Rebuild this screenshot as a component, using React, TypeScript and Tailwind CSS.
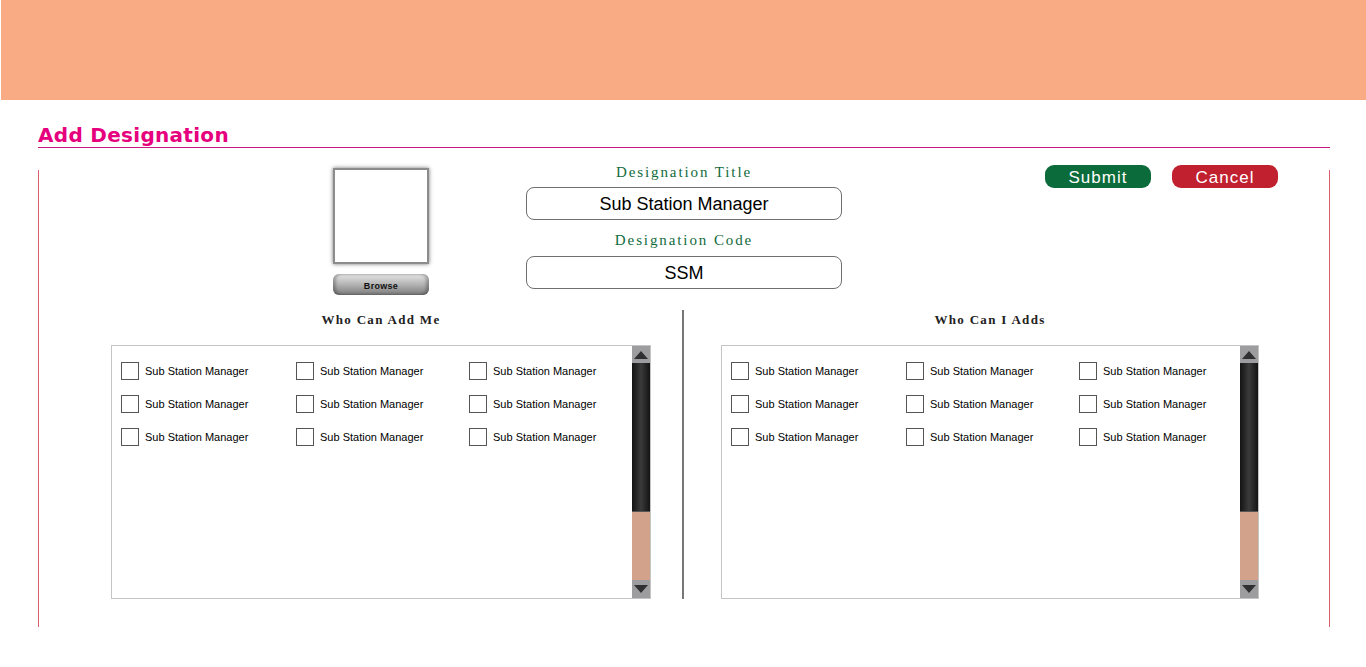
import React from "react";

const rows = [0, 1, 2];
const colW = ["w-[175px]", "w-[173px]", "w-[150px]"];

function ScrollBar() {
  return (
    <div className="flex w-[18px] shrink-0 flex-col self-stretch">
      <div className="flex h-[17px] items-center justify-center bg-[#9d9d9f]">
        <svg width="14" height="8" viewBox="0 0 14 8">
          <polygon points="7,0 14,8 0,8" fill="#2f2f2f" />
        </svg>
      </div>
      <div className="h-[149px] border-b border-[#555] bg-gradient-to-r from-[#141414] via-[#3b3b3b] to-[#141414]" />
      <div className="flex-1 bg-[#d3a28a]" />
      <div className="flex h-[18px] items-center justify-center bg-[#9d9d9f]">
        <svg width="14" height="8" viewBox="0 0 14 8">
          <polygon points="0,0 14,0 7,8" fill="#2f2f2f" />
        </svg>
      </div>
    </div>
  );
}

function CheckList({ width }: { width: string }) {
  return (
    <div className={`flex h-[254px] border border-[#c4c4c4] bg-white ${width}`}>
      <div className="flex min-w-0 flex-1 flex-col gap-[15px] pl-[9px] pt-[16px]">
        {rows.map((r) => (
          <div key={r} className="flex">
            {colW.map((w, c) => (
              <div key={c} className={`flex shrink-0 items-center ${w}`}>
                <div className="h-[18px] w-[18px] shrink-0 border border-[#555] bg-white" />
                <span className="ml-[6px] whitespace-nowrap text-[11px] leading-[18px] text-black [font-family:'Liberation_Sans',Arial,sans-serif]">
                  Sub Station Manager
                </span>
              </div>
            ))}
          </div>
        ))}
      </div>
      <ScrollBar />
    </div>
  );
}

export default function App() {
  return (
    <div className="min-h-[667px] w-full bg-white">
      <div className="pl-px">
        <div className="h-[100px] bg-[#f9ac84]" />
      </div>

      <div className="mx-[38px]">
        <div className="pt-[23px]">
          <h1 className="text-[20px] font-bold leading-[24px] tracking-[0.3px] text-[#e6007e] [font-family:'DejaVu_Sans',Verdana,sans-serif]">
            Add Designation
          </h1>
        </div>
        <div className="h-px w-[1292px] bg-[#c8177f]" />

        <div className="mt-[22px] flex h-[457px] w-[1292px] flex-col border-l border-r border-[#d9606c]">
          {/* top row */}
          <div className="-mt-[5px] flex items-start pl-[294px]">
            <div className="mt-[3px] flex w-[96px] flex-col">
              <div className="h-[96px] w-[96px] border-2 border-[#8c8c8c] bg-white shadow-[0_0_4px_rgba(0,0,0,0.55)]" />
              <div className="mt-[10px] flex h-[21px] items-center justify-center rounded-[6px] bg-gradient-to-b from-[#e8e8e8] via-[#b3b3b3] to-[#7b7b7b] pt-[3px] shadow-[inset_3px_0_3px_rgba(0,0,0,0.25),inset_-3px_0_3px_rgba(0,0,0,0.25)]">
                <span className="text-[9px] font-bold leading-[12px] tracking-[0.3px] text-[#111] [font-family:'Liberation_Sans',Arial,sans-serif]">
                  Browse
                </span>
              </div>
            </div>

            <div className="ml-[97px] flex w-[316px] flex-col items-center">
              <div className="h-[15px] text-[15px] leading-[15px] tracking-[1.9px] text-[#126b3c] [font-family:'Liberation_Serif','Times_New_Roman',serif]">
                Designation Title
              </div>
              <div className="mt-[7px] flex h-[33px] w-[316px] items-center justify-center rounded-[8px] border border-[#6f6f6f] bg-white pt-[2px]">
                <span className="text-[18px] text-black [font-family:'Liberation_Sans',Arial,sans-serif]">
                  Sub Station Manager
                </span>
              </div>
              <div className="mt-[13px] h-[15px] text-[15px] leading-[15px] tracking-[1.9px] text-[#126b3c] [font-family:'Liberation_Serif','Times_New_Roman',serif]">
                Designation Code
              </div>
              <div className="mt-[8px] flex h-[33px] w-[316px] items-center justify-center rounded-[8px] border border-[#6f6f6f] bg-white pt-[2px]">
                <span className="text-[18px] text-black [font-family:'Liberation_Sans',Arial,sans-serif]">
                  SSM
                </span>
              </div>
            </div>

            <div className="ml-[203px] flex gap-[21px]">
              <button className="flex h-[23px] w-[106px] items-center justify-center rounded-[9px] bg-[#0b6b3a] pt-[2px] text-[17px] leading-none tracking-[1px] text-white [font-family:'Liberation_Sans',Arial,sans-serif]">
                Submit
              </button>
              <button className="flex h-[23px] w-[106px] items-center justify-center rounded-[9px] bg-[#c1202f] pt-[2px] text-[17px] leading-none tracking-[1px] text-white [font-family:'Liberation_Sans',Arial,sans-serif]">
                Cancel
              </button>
            </div>
          </div>

          {/* bottom section */}
          <div className="mt-[15px] flex">
            <div className="flex w-[643px] flex-col pl-[72px]">
              <div className="w-[540px] text-center text-[13px] font-bold leading-[20px] tracking-[1.3px] text-[#222] [font-family:'Liberation_Serif','Times_New_Roman',serif]">
                Who Can Add Me
              </div>
              <div className="mt-[15px]">
                <CheckList width="w-[540px]" />
              </div>
            </div>
            <div className="h-[289px] w-[2px] bg-[#777]" />
            <div className="flex flex-col pl-[37px]">
              <div className="w-[538px] text-center text-[13px] font-bold leading-[20px] tracking-[1.3px] text-[#222] [font-family:'Liberation_Serif','Times_New_Roman',serif]">
                Who Can I Adds
              </div>
              <div className="mt-[15px]">
                <CheckList width="w-[538px]" />
              </div>
            </div>
          </div>
        </div>
      </div>
    </div>
  );
}
